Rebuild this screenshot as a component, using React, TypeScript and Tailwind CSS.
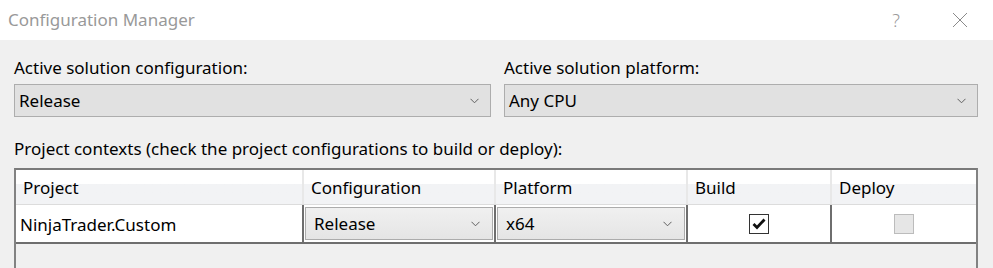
import React from "react";

const font = { fontFamily: '"Segoe UI", "Noto Sans", "Open Sans", sans-serif' };

function Chevron({ className = "" }: { className?: string }) {
  return (
    <svg width="9" height="6" viewBox="0 0 9 6" className={className}>
      <path d="M0.5 0.8 L4.5 4.8 L8.5 0.8" fill="none" stroke="#606060" strokeWidth="1" />
    </svg>
  );
}

function Combo({ value, className = "" }: { value: string; className?: string }) {
  return (
    <div className={`flex h-[33px] items-center justify-between border border-[#adadad] bg-[#e1e1e1] pl-[4px] pr-[11px] text-[17px] text-black ${className}`}>
      <span>{value}</span>
      <Chevron />
    </div>
  );
}

function CellCombo({ value }: { value: string }) {
  return (
    <div className="flex h-[33px] w-full items-center justify-between border border-[#acacac] bg-gradient-to-b from-[#f0f0f0] to-[#e5e5e5] pl-[8px] pr-[12px] text-[17px] text-black">
      <span>{value}</span>
      <Chevron />
    </div>
  );
}

export default function App() {
  return (
    <div className="h-[268px] w-[993px] overflow-hidden bg-[#f0f0f0]" style={font}>
      <div className="flex h-[40px] items-center justify-between bg-white pl-[8px] pr-[25px]">
        <span className="text-[17px] text-[#999999]">Configuration Manager</span>
        <div className="flex items-center gap-[52px]">
          <span className="text-[18px] font-light text-[#9a9a9a]">?</span>
          <svg width="16" height="16" viewBox="0 0 16 16">
            <path d="M1 1 L15 15 M15 1 L1 15" stroke="#8a8a8a" strokeWidth="1" />
          </svg>
        </div>
      </div>
      <div className="px-[14px] pr-[15px]">
        <div className="mt-[14px] grid grid-cols-[477px_474px] gap-x-[13px]">
          <div>
            <div className="h-[30px] text-[17px] leading-[28px] text-black">Active solution configuration:</div>
            <Combo value="Release" />
          </div>
          <div>
            <div className="h-[30px] text-[17px] leading-[28px] text-black">Active solution platform:</div>
            <Combo value="Any CPU" />
          </div>
        </div>
        <div className="mt-[19px] mb-[6px] h-[26px] text-[17px] leading-[26px] text-black">
          Project contexts (check the project configurations to build or deploy):
        </div>
        <div className="h-[120px] border-x-2 border-t-2 border-[#7a7a7a] border-x-[#828282]">
          <div className="grid h-[35px] grid-cols-[288px_192px_192px_144px_1fr] border-b border-[#dcdcdc] bg-gradient-to-b from-white from-40% to-[#f2f3f5] to-40% text-[17px] text-black">
            <div className="flex items-center border-r-2 border-[#e8e8e8] pl-[7px] pt-[2px]">Project</div>
            <div className="flex items-center border-r-2 border-[#e8e8e8] pl-[7px] pt-[2px]">Configuration</div>
            <div className="flex items-center border-r-2 border-[#e8e8e8] pl-[7px] pt-[2px]">Platform</div>
            <div className="flex items-center border-r-2 border-[#e8e8e8] pl-[7px] pt-[2px]">Build</div>
            <div className="flex items-center pl-[7px] pt-[2px]">Deploy</div>
          </div>
          <div className="grid h-[39px] grid-cols-[288px_192px_192px_144px_1fr] border-b-2 border-[#6e6e6e] bg-white text-[17px] text-black">
            <div className="flex items-center border-r-2 border-[#6e6e6e] pl-[4px] pt-[2px]">NinjaTrader.Custom</div>
            <div className="flex items-center border-r-2 border-[#6e6e6e] px-[1px]">
              <CellCombo value="Release" />
            </div>
            <div className="flex items-center border-r-2 border-[#6e6e6e] px-[1px]">
              <CellCombo value="x64" />
            </div>
            <div className="flex items-center justify-center border-r-2 border-[#6e6e6e]">
              <div className="flex h-[20px] w-[20px] items-center justify-center border border-[#333333] bg-white">
                <svg width="14" height="12" viewBox="0 0 14 12">
                  <path d="M1.5 6 L5 9.5 L12.5 1.5" fill="none" stroke="#111111" strokeWidth="2.8" />
                </svg>
              </div>
            </div>
            <div className="flex items-center justify-center">
              <div className="h-[20px] w-[20px] border border-[#bcbcbc] bg-[#e6e6e6]" />
            </div>
          </div>
        </div>
      </div>
    </div>
  );
}
